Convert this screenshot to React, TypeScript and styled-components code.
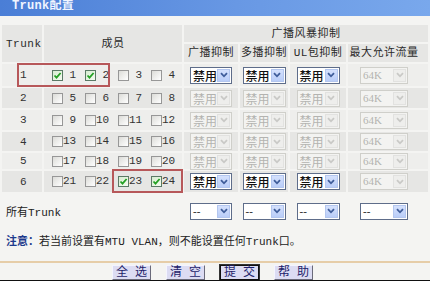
import React from 'react';
import styled, { createGlobalStyle, css } from 'styled-components';

const Global = createGlobalStyle`
  html, body { margin: 0; padding: 0; background: #f4f4f2; }
  body {
    width: 430px; height: 281px; overflow: hidden;
    font-family: "Liberation Mono", "Noto Sans CJK SC", monospace;
  }
`;

const Page = styled.div`
  position: relative;
  width: 430px;
  height: 281px;
  display: flex;
  flex-direction: column;
  background: #f4f4f2;
  overflow: hidden;
`;

const TitleBar = styled.div`
  flex: none;
  height: 16px;
  padding-left: 12px;
  background: linear-gradient(to right, #4a7ed6, #6898e4 55%, #79a8ec);
  color: #f0f5ff;
  font: bold 12px/12px "Liberation Mono", "Noto Sans CJK SC", monospace;
  letter-spacing: 0.3px;
`;

const cols = css`
  display: grid;
  grid-template-columns: 40px 138px 54px 48px 56px 80px;
  column-gap: 2px;
  margin-left: 2px;
`;

const Table = styled.div`
  ${cols};
  grid-template-rows: 17px 18px 22px 20px 20px 19px 16px 21px;
  row-gap: 2px;
  margin-top: 9px;
`;

const HeadCell = styled.div<{ $col: string; $row: string; $left?: boolean }>`
  grid-column: ${(p) => p.$col};
  grid-row: ${(p) => p.$row};
  background: #e6e6e4;
  display: flex;
  align-items: center;
  justify-content: ${(p) => (p.$left ? 'flex-start' : 'center')};
  padding-left: ${(p) => (p.$left ? '4px' : '0')};
  padding-right: ${(p) => (p.$col === '6' ? '8px' : '0')};
  color: #2a2a2a;
  font-size: 11px;
  line-height: 12px;
  letter-spacing: 0.5px;
  white-space: nowrap;
`;

const BodyCell = styled.div<{ $even: boolean; $pr?: number; $start?: boolean }>`
  background: ${(p) => (p.$even ? '#e6e6e4' : '#eeeeec')};
  display: flex;
  align-items: center;
  justify-content: ${(p) => (p.$start ? 'flex-start' : 'center')};
  padding-right: ${(p) => p.$pr ?? 0}px;
  min-width: 0;
`;

const NumCell = styled(BodyCell)`
  padding-left: 18px;
  color: #333;
  font-size: 11px;
`;

const MemberCell = styled(BodyCell)`
  padding-left: 8px;
`;

const Member = styled.div`
  width: 33px;
  flex: none;
  display: flex;
  align-items: center;
`;

const Box = styled.span<{ $checked: boolean }>`
  width: 11px;
  height: 11px;
  box-sizing: border-box;
  flex: none;
  border: 1px solid ${(p) => (p.$checked ? '#5b7a66' : '#979797')};
  background: ${(p) =>
    p.$checked
      ? 'linear-gradient(135deg, #d6ecd0, #f4fbf0)'
      : 'linear-gradient(135deg, #dcdcd8, #ffffff)'};
  display: flex;
  align-items: center;
  justify-content: center;
`;

const MemberLabel = styled.span`
  font-size: 11px;
  line-height: 11px;
  color: #333;
  white-space: pre;
`;

const Drop = styled.div<{ $off: boolean; $w: number }>`
  width: ${(p) => p.$w}px;
  height: 17px;
  box-sizing: border-box;
  border: 1px solid ${(p) => (p.$off ? '#cfcfca' : '#5e6d8a')};
  background: ${(p) => (p.$off ? '#f3f3f1' : '#ffffff')};
  display: flex;
  align-items: center;
  justify-content: space-between;
  padding: 0 1px 0 2px;
  overflow: hidden;
`;

const DropText = styled.span<{ $off: boolean; $serif?: boolean }>`
  font-family: ${(p) =>
    p.$serif ? '"Liberation Serif", serif' : '"Noto Sans CJK SC", sans-serif'};
  font-size: ${(p) => (p.$serif ? 11 : 12)}px;
  line-height: 13px;
  color: ${(p) => (p.$off ? '#b3b3b0' : '#111')};
  font-weight: ${(p) => (p.$off ? 400 : 500)};
  white-space: nowrap;
  flex: none;
`;

const Arrow = styled.span<{ $off: boolean }>`
  width: 13px;
  height: 13px;
  flex: none;
  box-sizing: border-box;
  border: 1px solid ${(p) => (p.$off ? '#e2e2e0' : '#b3c6ef')};
  background: ${(p) => (p.$off ? '#eeeeec' : 'linear-gradient(#d5e1fd, #b9cdf8)')};
  display: flex;
  align-items: center;
  justify-content: center;
`;

const AllRow = styled.div`
  ${cols};
  height: 18px;
  margin-top: 10px;
`;

const AllLabel = styled.div`
  grid-column: 1 / span 2;
  display: flex;
  align-items: center;
  padding-left: 4px;
  font-size: 11px;
  color: #222;
`;

const AllCell = styled.div<{ $pr?: number }>`
  display: flex;
  align-items: center;
  justify-content: center;
  padding-right: ${(p) => p.$pr ?? 0}px;
`;

const Note = styled.div`
  margin: 15px 0 0 6px;
  font-size: 11px;
  line-height: 14px;
  color: #222;
  white-space: nowrap;
`;

const NoteStrong = styled.b`
  color: #1d3a8c;
`;

const Divider = styled.div`
  height: 2px;
  margin-top: 12px;
  background: #e6cda8;
  flex: none;
`;

const Buttons = styled.div`
  display: flex;
  gap: 15px;
  padding-left: 112px;
  margin-top: 2px;
  flex: none;
`;

const Btn = styled.button<{ $focus?: boolean }>`
  width: 39px;
  height: 15px;
  padding: 0;
  box-sizing: border-box;
  background: #dcdcf3;
  border: 1px solid;
  border-color: ${(p) => (p.$focus ? '#111' : '#f4f4ff #6a6a7a #6a6a7a #f4f4ff')};
  outline: ${(p) => (p.$focus ? '1px solid #333' : 'none')};
  color: #1e1e6a;
  font-family: "Liberation Mono", "Noto Sans CJK SC", monospace;
  font-size: 12px;
  line-height: 12px;
  white-space: pre;
`;

const Footer = styled.div`
  flex: 1;
  background: #111;
`;

const Mark = styled.div<{ $x: number; $y: number; $w: number; $h: number }>`
  position: absolute;
  left: ${(p) => p.$x}px;
  top: ${(p) => p.$y}px;
  width: ${(p) => p.$w}px;
  height: ${(p) => p.$h}px;
  box-sizing: border-box;
  border: 2px solid #b7585a;
  pointer-events: none;
`;

const Check = () => (
  <svg width="9" height="9" viewBox="0 0 9 9">
    <path d="M1.5 4.5 L3.5 6.6 L7.6 2" fill="none" stroke="#23a023" strokeWidth="1.8" />
  </svg>
);

const Chevron = ({ off }: { off: boolean }) => (
  <svg width="8" height="6" viewBox="0 0 8 6">
    <path d="M1 1.2 L4 4.3 L7 1.2" fill="none" stroke={off ? '#c9c9c6' : '#3f5d9a'} strokeWidth="1.8" />
  </svg>
);

const Dropdown = ({ text, off, w, serif }: { text: string; off: boolean; w: number; serif?: boolean }) => (
  <Drop $off={off} $w={w}>
    <DropText $off={off} $serif={serif}>{text}</DropText>
    <Arrow $off={off}>
      <Chevron off={off} />
    </Arrow>
  </Drop>
);

const rows = [
  { n: 1, start: 1, checked: [1, 2], active: true },
  { n: 2, start: 5, checked: [], active: false },
  { n: 3, start: 9, checked: [], active: false },
  { n: 4, start: 13, checked: [], active: false },
  { n: 5, start: 17, checked: [], active: false },
  { n: 6, start: 21, checked: [23, 24], active: true },
];

const pad2 = (v: number) => (v < 10 ? ' ' + v : String(v));

export default function App() {
  return (
    <Page>
      <Global />
      <TitleBar>Trunk配置</TitleBar>
      <Table>
        <HeadCell $col="1" $row="1 / span 2" $left>Trunk</HeadCell>
        <HeadCell $col="2" $row="1 / span 2">成员</HeadCell>
        <HeadCell $col="3 / span 4" $row="1">广播风暴抑制</HeadCell>
        <HeadCell $col="3" $row="2">广播抑制</HeadCell>
        <HeadCell $col="4" $row="2">多播抑制</HeadCell>
        <HeadCell $col="5" $row="2">UL包抑制</HeadCell>
        <HeadCell $col="6" $row="2">最大允许流量</HeadCell>
        {rows.map((r) => {
          const even = r.n % 2 === 0;
          return (
            <React.Fragment key={r.n}>
              <NumCell $even={even} $start>{r.n}</NumCell>
              <MemberCell $even={even} $start>
                {[0, 1, 2, 3].map((i) => {
                  const v = r.start + i;
                  const c = r.checked.includes(v);
                  return (
                    <Member key={v}>
                      <Box $checked={c}>{c && <Check />}</Box>
                      <MemberLabel>{pad2(v)}</MemberLabel>
                    </Member>
                  );
                })}
              </MemberCell>
              <BodyCell $even={even}>
                <Dropdown text="禁用" off={!r.active} w={42} />
              </BodyCell>
              <BodyCell $even={even}>
                <Dropdown text="禁用" off={!r.active} w={43} />
              </BodyCell>
              <BodyCell $even={even}>
                <Dropdown text="禁用" off={!r.active} w={43} />
              </BodyCell>
              <BodyCell $even={even} $pr={8}>
                <Dropdown text="64K" off w={48} serif />
              </BodyCell>
            </React.Fragment>
          );
        })}
      </Table>
      <AllRow>
        <AllLabel>所有Trunk</AllLabel>
        <AllCell><Dropdown text="--" off={false} w={42} serif /></AllCell>
        <AllCell><Dropdown text="--" off={false} w={43} serif /></AllCell>
        <AllCell><Dropdown text="--" off={false} w={43} serif /></AllCell>
        <AllCell $pr={8}><Dropdown text="--" off={false} w={48} serif /></AllCell>
      </AllRow>
      <Note>
        <NoteStrong>注意：</NoteStrong>若当前设置有MTU VLAN，则不能设置任何Trunk口。
      </Note>
      <Divider />
      <Buttons>
        <Btn>全 选</Btn>
        <Btn>清 空</Btn>
        <Btn $focus>提 交</Btn>
        <Btn>帮 助</Btn>
      </Buttons>
      <Footer />
      <Mark $x={17} $y={63} $w={93} $h={24} />
      <Mark $x={112} $y={169} $w={71} $h={24} />
    </Page>
  );
}
